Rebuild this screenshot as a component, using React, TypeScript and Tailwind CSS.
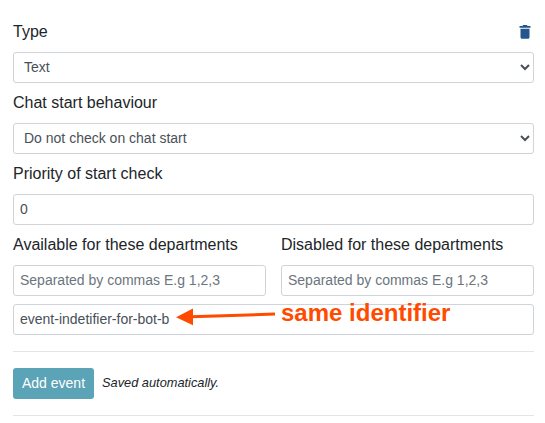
import React from 'react';

const control =
  'block h-[31px] w-full rounded-[3px] border border-[#ced4da] bg-white px-[6px] pt-[3px] pb-[5px] text-[14px] leading-[21px] text-[#495057] placeholder:text-[#6c757d] placeholder:opacity-100';

function Field({ label, children }: { label: string; children: React.ReactNode }) {
  return (
    <label className="mb-2 block">
      <span className="mb-2 block h-6 text-[16px] leading-6">{label}</span>
      {children}
    </label>
  );
}

export default function App() {
  return (
    <div className="h-[423px] w-[545px] overflow-hidden bg-white pt-5 pr-[11px] pl-[13px] font-['Liberation_Sans',Arial,sans-serif] text-[#212529]">
      <div className="mb-2 flex h-6 items-center justify-between">
        <label htmlFor="type" className="text-[16px] leading-6">Type</label>
        <button type="button" aria-label="Delete event" className="block">
          <svg width="18" height="18" viewBox="0 0 24 24" fill="#26548d">
            <path d="M6 19c0 1.100.9 2 2 2h8c1.100 0 2-.9 2-2V7.500H6v11.500zM19.300 4h-3.800l-1-1.200h-5l-1 1.200H4.700v2.300h14.600V4z" />
          </svg>
        </button>
      </div>
      <select id="type" className={control + ' mb-2'}>
        <option>Text</option>
      </select>

      <Field label="Chat start behaviour">
        <select className={control}>
          <option>Do not check on chat start</option>
        </select>
      </Field>

      <Field label="Priority of start check">
        <input type="text" defaultValue="0" className={control} />
      </Field>

      <div className="grid grid-cols-2 gap-[15px]">
        <Field label="Available for these departments">
          <input type="text" placeholder="Separated by commas E.g 1,2,3" className={control} />
        </Field>
        <Field label="Disabled for these departments">
          <input type="text" placeholder="Separated by commas E.g 1,2,3" className={control} />
        </Field>
      </div>

      <div className="relative">
        <input type="text" defaultValue="event-indetifier-for-bot-b" className={control} />
        <svg className="pointer-events-none absolute top-0 left-[160px]" width="110" height="31" viewBox="0 0 110 31" fill="#ff4b00">
          <path d="M3 13.200L20 4.500V21.200Z" />
          <path d="M18 12.800L102 10" stroke="#ff4b00" strokeWidth="3" />
        </svg>
        <span className="pointer-events-none absolute -top-[5px] left-[268px] text-[24px] leading-7 font-bold whitespace-nowrap text-[#ff4b00]">
          same identifier
        </span>
      </div>

      <hr className="my-4 border-t border-black/10" />
      <div className="flex items-center gap-2">
        <button type="button" className="h-[31px] w-[81px] rounded-[3px] bg-[#5ba3b7] text-center text-[14px] leading-[21px] whitespace-nowrap text-white">
          Add event
        </button>
        <i className="pb-px text-[12.8px] leading-5">Saved automatically.</i>
      </div>
      <hr className="my-4 border-t border-black/10" />
    </div>
  );
}
